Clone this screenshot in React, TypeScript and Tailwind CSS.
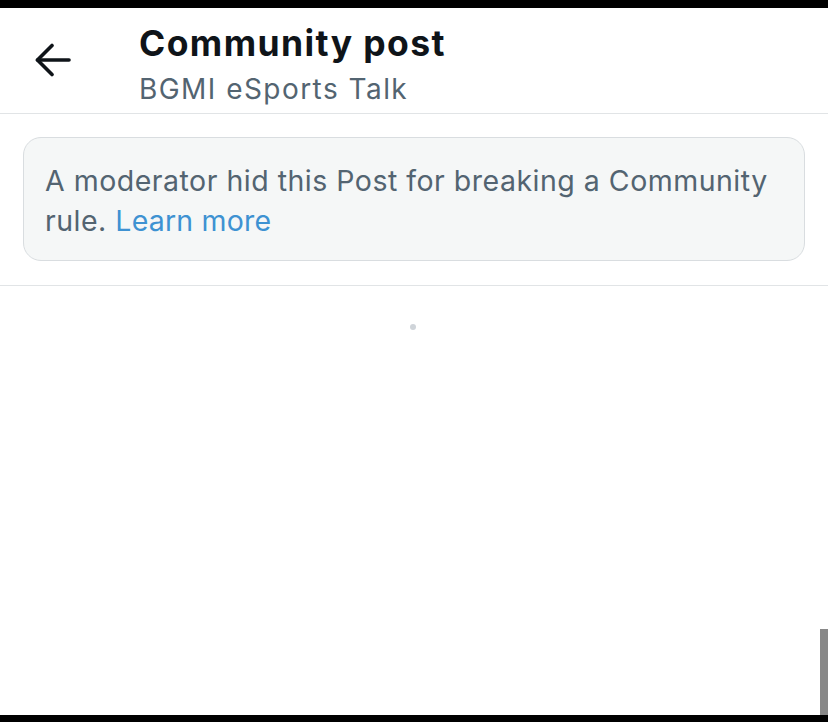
const FONT = "font-['Inter','Liberation_Sans',sans-serif]";

function BackArrow() {
  return (
    <svg width="36" height="34" viewBox="0 0 36 34" fill="none" stroke="currentColor" strokeWidth="3.6" strokeLinecap="round" strokeLinejoin="round">
      <path d="M17 2.5 2.5 17 17 31.5" />
      <path d="M2.5 17H34" />
    </svg>
  );
}

export default function App() {
  return (
    <div className={`relative flex h-[722px] w-[828px] flex-col overflow-hidden bg-white ${FONT}`}>
      {/* status strip */}
      <div className="h-[8px] shrink-0 bg-black" />

      {/* top bar */}
      <header className="flex h-[106px] shrink-0 items-start border-b border-[#e1e4e6]">
        <button className="ml-[35px] mt-[35px] flex h-[34px] w-[36px] items-center justify-center text-[#0f1419]">
          <BackArrow />
        </button>
        <div className="ml-[68px] mt-[14px] flex flex-col">
          <h1 className="text-[35.5px] font-bold leading-[44px] tracking-[1.4px] text-[#0f1419]">Community post</h1>
          <p className="mt-[4px] text-[28px] leading-[38px] tracking-[1.45px] text-[#536471]">BGMI eSports Talk</p>
        </div>
      </header>

      {/* hidden post notice */}
      <section className="shrink-0 border-b border-[#e1e4e6] px-[23px] pb-[24px] pt-[23px]">
        <div className="rounded-[18px] border border-[#d9dde0] bg-[#f5f7f7] px-[21px] pb-[19px] pt-[23px]">
          <p className="text-[28.5px] leading-[40px] tracking-[0.5px] text-[#536471]">
            A moderator hid this Post for breaking a Community rule.{" "}
            <a className="tracking-[0.2px] text-[#3e92d2]">Learn more</a>
          </p>
        </div>
      </section>

      {/* loader */}
      <div className="flex flex-1 justify-center pt-[38px]">
        <div className="ml-[-2px] h-[6px] w-[6px] rounded-full bg-[#cfd4d9]" />
      </div>

      {/* scroll thumb */}
      <div className="absolute bottom-[7px] right-0 h-[86px] w-[8px] bg-[#888888]" />

      <div className="h-[7px] shrink-0 bg-black" />
    </div>
  );
}
